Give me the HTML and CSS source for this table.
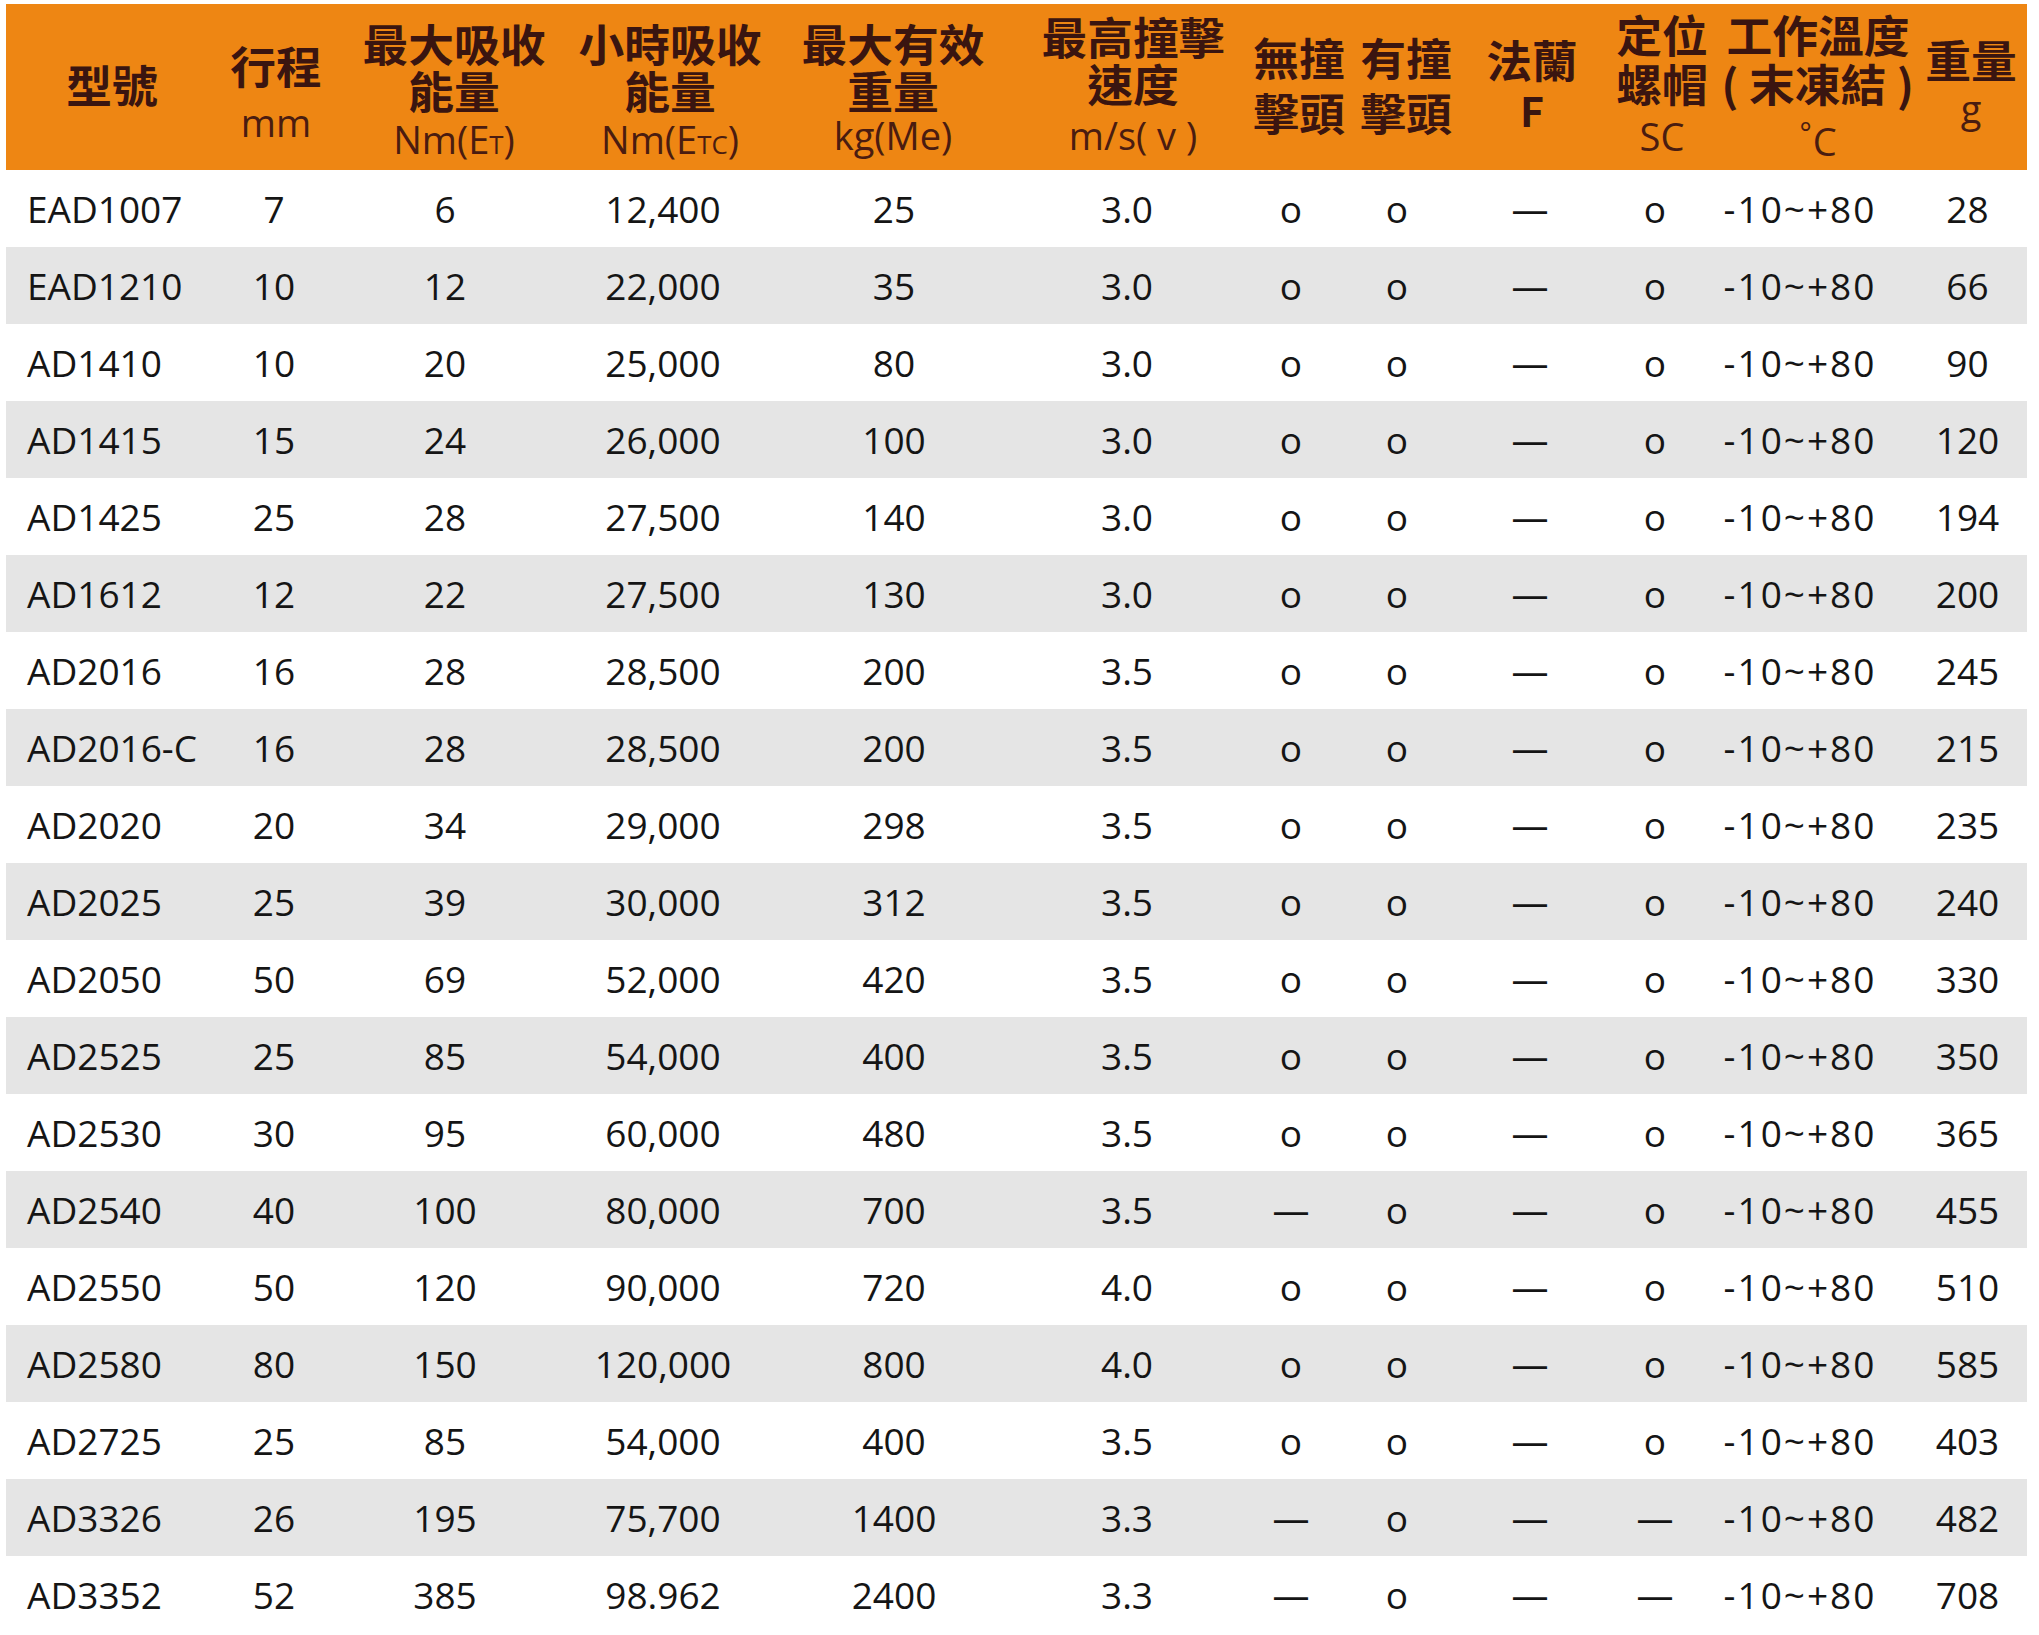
FILE: index.html
```html
<!DOCTYPE html>
<html lang="zh-Hant">
<head>
<meta charset="utf-8">
<title>油壓緩衝器規格表</title>
<link rel="stylesheet" href="styles.css">
</head>
<body>
<div class="table">
  <div class="thead">
    <div class="th th-a"><span class="zh">型號</span></div>
    <div class="th th-b"><span class="zh">行程</span><span class="unit u-mm">mm</span></div>
    <div class="th th-c"><span class="zh">最大吸收</span><span class="zh">能量</span><span class="unit u-c">Nm(E<span class="sm">T</span>)</span></div>
    <div class="th th-c"><span class="zh">小時吸收</span><span class="zh">能量</span><span class="unit u-c">Nm(E<span class="sm">TC</span>)</span></div>
    <div class="th th-c"><span class="zh">最大有效</span><span class="zh">重量</span><span class="unit u-e">kg(Me)</span></div>
    <div class="th th-f"><span class="zh">最高撞擊</span><span class="zh">速度</span><span class="unit u-f">m/s( v )</span></div>
    <div class="th th-g"><span class="zh zh-tall">無撞</span><span class="zh zh-tall">擊頭</span></div>
    <div class="th th-g"><span class="zh zh-tall">有撞</span><span class="zh zh-tall">擊頭</span></div>
    <div class="th th-i"><span class="zh">法蘭</span><span class="zh zh-f">F</span></div>
    <div class="th th-j"><span class="zh zh-loose">定位</span><span class="zh zh-loose">螺帽</span><span class="unit u-j">SC</span></div>
    <div class="th th-j"><span class="zh zh-loose">工作溫度</span><span class="zh zh-loose">( 末凍結 )</span><span class="unit u-k"><span class="deg">°</span>C</span></div>
    <div class="th th-i"><span class="zh">重量</span><span class="unit u-g">g</span></div>
  </div>
  <div class="tbody">
    <div class="row"><span class="td model">EAD1007</span><span class="td">7</span><span class="td">6</span><span class="td">12,400</span><span class="td">25</span><span class="td">3.0</span><span class="td">o</span><span class="td">o</span><span class="td">—</span><span class="td">o</span><span class="td temp">-10~+80</span><span class="td">28</span></div>
    <div class="row"><span class="td model">EAD1210</span><span class="td">10</span><span class="td">12</span><span class="td">22,000</span><span class="td">35</span><span class="td">3.0</span><span class="td">o</span><span class="td">o</span><span class="td">—</span><span class="td">o</span><span class="td temp">-10~+80</span><span class="td">66</span></div>
    <div class="row"><span class="td model">AD1410</span><span class="td">10</span><span class="td">20</span><span class="td">25,000</span><span class="td">80</span><span class="td">3.0</span><span class="td">o</span><span class="td">o</span><span class="td">—</span><span class="td">o</span><span class="td temp">-10~+80</span><span class="td">90</span></div>
    <div class="row"><span class="td model">AD1415</span><span class="td">15</span><span class="td">24</span><span class="td">26,000</span><span class="td">100</span><span class="td">3.0</span><span class="td">o</span><span class="td">o</span><span class="td">—</span><span class="td">o</span><span class="td temp">-10~+80</span><span class="td">120</span></div>
    <div class="row"><span class="td model">AD1425</span><span class="td">25</span><span class="td">28</span><span class="td">27,500</span><span class="td">140</span><span class="td">3.0</span><span class="td">o</span><span class="td">o</span><span class="td">—</span><span class="td">o</span><span class="td temp">-10~+80</span><span class="td">194</span></div>
    <div class="row"><span class="td model">AD1612</span><span class="td">12</span><span class="td">22</span><span class="td">27,500</span><span class="td">130</span><span class="td">3.0</span><span class="td">o</span><span class="td">o</span><span class="td">—</span><span class="td">o</span><span class="td temp">-10~+80</span><span class="td">200</span></div>
    <div class="row"><span class="td model">AD2016</span><span class="td">16</span><span class="td">28</span><span class="td">28,500</span><span class="td">200</span><span class="td">3.5</span><span class="td">o</span><span class="td">o</span><span class="td">—</span><span class="td">o</span><span class="td temp">-10~+80</span><span class="td">245</span></div>
    <div class="row"><span class="td model">AD2016-C</span><span class="td">16</span><span class="td">28</span><span class="td">28,500</span><span class="td">200</span><span class="td">3.5</span><span class="td">o</span><span class="td">o</span><span class="td">—</span><span class="td">o</span><span class="td temp">-10~+80</span><span class="td">215</span></div>
    <div class="row"><span class="td model">AD2020</span><span class="td">20</span><span class="td">34</span><span class="td">29,000</span><span class="td">298</span><span class="td">3.5</span><span class="td">o</span><span class="td">o</span><span class="td">—</span><span class="td">o</span><span class="td temp">-10~+80</span><span class="td">235</span></div>
    <div class="row"><span class="td model">AD2025</span><span class="td">25</span><span class="td">39</span><span class="td">30,000</span><span class="td">312</span><span class="td">3.5</span><span class="td">o</span><span class="td">o</span><span class="td">—</span><span class="td">o</span><span class="td temp">-10~+80</span><span class="td">240</span></div>
    <div class="row"><span class="td model">AD2050</span><span class="td">50</span><span class="td">69</span><span class="td">52,000</span><span class="td">420</span><span class="td">3.5</span><span class="td">o</span><span class="td">o</span><span class="td">—</span><span class="td">o</span><span class="td temp">-10~+80</span><span class="td">330</span></div>
    <div class="row"><span class="td model">AD2525</span><span class="td">25</span><span class="td">85</span><span class="td">54,000</span><span class="td">400</span><span class="td">3.5</span><span class="td">o</span><span class="td">o</span><span class="td">—</span><span class="td">o</span><span class="td temp">-10~+80</span><span class="td">350</span></div>
    <div class="row"><span class="td model">AD2530</span><span class="td">30</span><span class="td">95</span><span class="td">60,000</span><span class="td">480</span><span class="td">3.5</span><span class="td">o</span><span class="td">o</span><span class="td">—</span><span class="td">o</span><span class="td temp">-10~+80</span><span class="td">365</span></div>
    <div class="row"><span class="td model">AD2540</span><span class="td">40</span><span class="td">100</span><span class="td">80,000</span><span class="td">700</span><span class="td">3.5</span><span class="td">—</span><span class="td">o</span><span class="td">—</span><span class="td">o</span><span class="td temp">-10~+80</span><span class="td">455</span></div>
    <div class="row"><span class="td model">AD2550</span><span class="td">50</span><span class="td">120</span><span class="td">90,000</span><span class="td">720</span><span class="td">4.0</span><span class="td">o</span><span class="td">o</span><span class="td">—</span><span class="td">o</span><span class="td temp">-10~+80</span><span class="td">510</span></div>
    <div class="row"><span class="td model">AD2580</span><span class="td">80</span><span class="td">150</span><span class="td">120,000</span><span class="td">800</span><span class="td">4.0</span><span class="td">o</span><span class="td">o</span><span class="td">—</span><span class="td">o</span><span class="td temp">-10~+80</span><span class="td">585</span></div>
    <div class="row"><span class="td model">AD2725</span><span class="td">25</span><span class="td">85</span><span class="td">54,000</span><span class="td">400</span><span class="td">3.5</span><span class="td">o</span><span class="td">o</span><span class="td">—</span><span class="td">o</span><span class="td temp">-10~+80</span><span class="td">403</span></div>
    <div class="row"><span class="td model">AD3326</span><span class="td">26</span><span class="td">195</span><span class="td">75,700</span><span class="td">1400</span><span class="td">3.3</span><span class="td">—</span><span class="td">o</span><span class="td">—</span><span class="td">—</span><span class="td temp">-10~+80</span><span class="td">482</span></div>
    <div class="row"><span class="td model">AD3352</span><span class="td">52</span><span class="td">385</span><span class="td">98.962</span><span class="td">2400</span><span class="td">3.3</span><span class="td">—</span><span class="td">o</span><span class="td">—</span><span class="td">—</span><span class="td temp">-10~+80</span><span class="td">708</span></div>
  </div>
</div>
</body>
</html>
```

FILE: styles.css
```css
html, body {
  margin: 0;
  padding: 0;
  background: #ffffff;
}

.table {
  margin: 4px 0 0 6px;
  width: 2021px;
}

/* ---------- header ---------- */
.thead {
  display: grid;
  grid-template-columns: 211px 118px 238px 194px 252px 228px 104px 110px 142px 118px 194px 112px;
  height: 166px;
  background: #ee8613;
  color: #3a1510;
}

.th {
  display: flex;
  flex-direction: column;
  align-items: center;
  justify-content: flex-start;
  white-space: nowrap;
  box-sizing: border-box;
}

.zh {
  display: block;
  font-family: "Noto Sans CJK TC", "Noto Sans CJK SC", sans-serif;
  font-weight: 700;
  font-size: 44px;
  line-height: 47px;
  transform: scaleX(1.04);
}

.zh-tall { line-height: 55px; }
.zh-loose { line-height: 49px; }
.zh-f { font-size: 41px; margin-top: 3px; transform: none; }

.unit {
  display: block;
  font-family: "Open Sans", "Liberation Sans", sans-serif;
  font-weight: 400;
  font-size: 38px;
  line-height: 46px;
  color: #4a1c10;
}

.unit .sm {
  font-size: 0.68em;
}

.unit .deg {
  font-size: 0.75em;
  vertical-align: 0.45em;
  margin-right: 1px;
}

.th-a { padding-top: 57px; }
.th-b { padding-top: 38px; }
.th-c { padding-top: 16px; }
.th-f { padding-top: 9px; }
.th-g { padding-top: 26px; }
.th-i { padding-top: 32px; }
.th-j { padding-top: 6px; }

.u-mm { margin-top: 10px; }
.u-c { margin-top: 2px; }
.u-e { margin-top: -2px; }
.u-f { margin-top: 5px; }
.u-j { margin-top: 5px; }
.u-k { margin-top: 1px; }
.u-g { margin-top: 2px; }

/* ---------- body ---------- */
.row {
  display: grid;
  grid-template-columns: 214px 108px 234px 202px 260px 206px 122px 90px 176px 74px 216px 119px;
  height: 77px;
  font-family: "Open Sans", "Liberation Sans", sans-serif;
  font-size: 37px;
  line-height: 77px;
  color: #151515;
}

.row:nth-child(even) {
  background: #e5e5e5;
}

.td {
  display: flex;
  justify-content: center;
  white-space: nowrap;
}

.td.model {
  justify-content: flex-start;
  padding-left: 21px;
}

.td.temp {
  letter-spacing: 2px;
}
```
